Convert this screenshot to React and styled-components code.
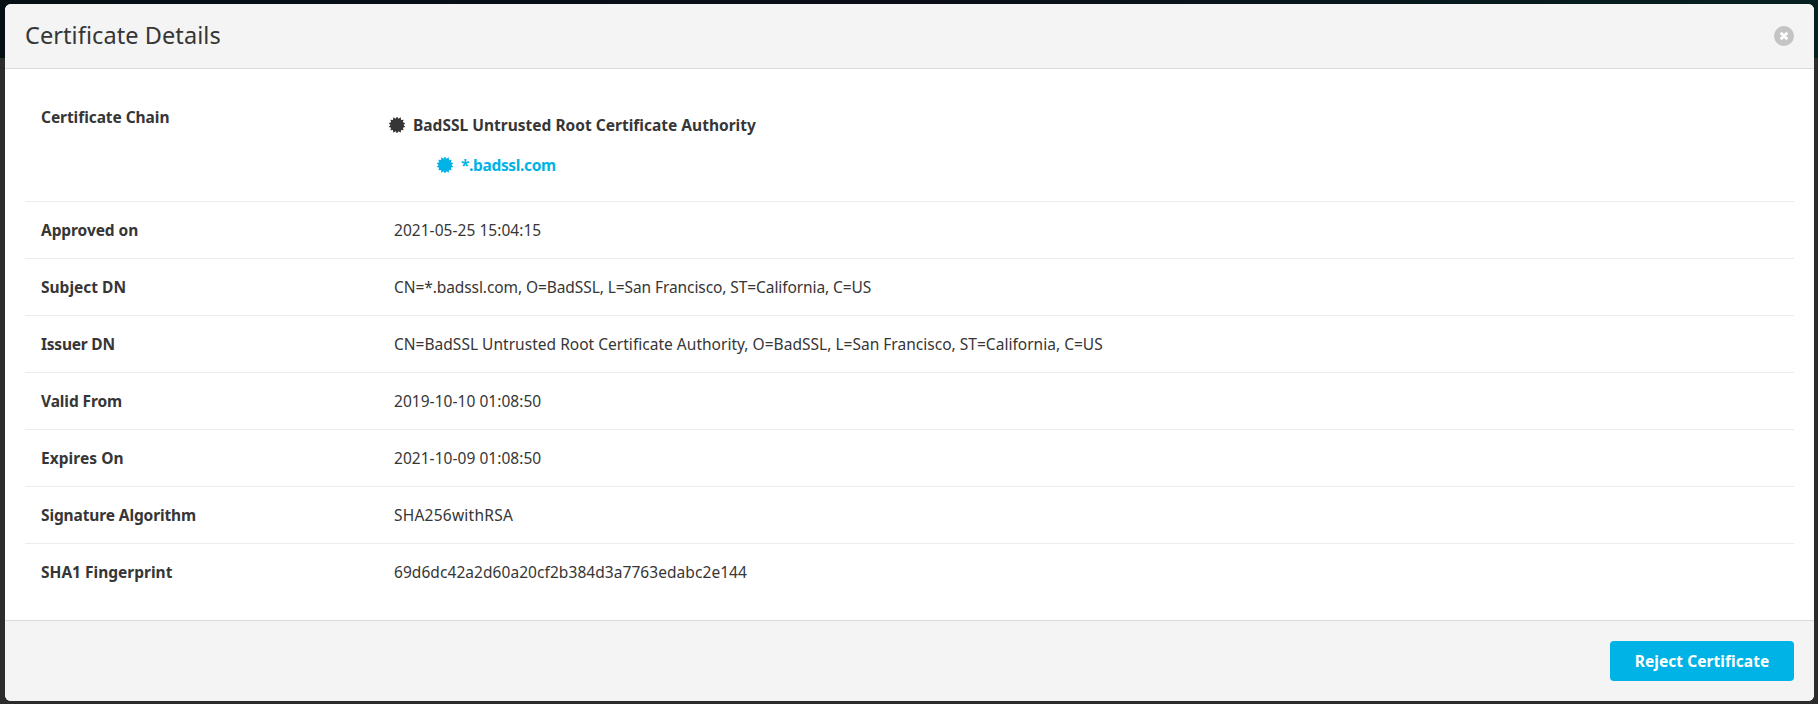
import React from 'react';
import styled, { createGlobalStyle } from 'styled-components';

const GlobalStyle = createGlobalStyle`
  * { box-sizing: border-box; }
  body { margin: 0; background: #2d2c2c; }
`;

const Backdrop = styled.div`
  height: 704px;
  padding: 4px 4px 3px 5px;
  background: linear-gradient(90deg, #040f14, #0a0d18 50%, #05211f) 0 0 / 100% 58px no-repeat, #2d2c2c;
  font-family: 'Noto Sans', sans-serif;
  font-size: 15.5px;
  color: #363636;
`;

const Dialog = styled.section`
  height: 100%;
  display: flex;
  flex-direction: column;
  background: #fff;
  border-radius: 6px;
  overflow: hidden;
`;

const Header = styled.header`
  height: 65px;
  flex: none;
  display: flex;
  align-items: center;
  justify-content: space-between;
  padding: 0 20px;
  background: #f4f4f4;
  border-bottom: 1px solid #dbdbdb;
`;

const Title = styled.h1`
  margin: 0;
  padding-bottom: 2px;
  font-size: 23.5px;
  font-weight: 400;
  line-height: 32px;
  letter-spacing: 0.08px;
`;

const CloseButton = styled.button`
  display: block;
  width: 20px;
  height: 20px;
  padding: 0;
  border: 0;
  border-radius: 50%;
  background: #c4c4c4;
  svg { display: block; }
`;

const Body = styled.div`
  flex: 1;
  padding: 20px 20px 0;
`;

const Row = styled.div`
  display: grid;
  grid-template-columns: 353px 1fr;
  align-items: start;
  height: ${(p) => p.$height || 57}px;
  padding: 16px 16px 0;
  line-height: 24px;
  border-bottom: ${(p) => (p.$last ? 'none' : '1px solid #ececec')};
`;

const Label = styled.div`
  font-weight: 700;
  white-space: nowrap;
  letter-spacing: ${(p) => p.$spacing || 0}px;
`;

const Value = styled.div`
  white-space: nowrap;
  letter-spacing: ${(p) => p.$spacing || 0}px;
`;

const Chain = styled.div`
  display: flex;
  flex-direction: column;
  gap: 16px;
  padding-top: 8px;
  margin-left: -5px;
`;

const ChainItem = styled.div`
  display: flex;
  align-items: center;
  gap: 8px;
  padding-left: ${(p) => p.$level * 48}px;
  font-weight: 700;
  color: ${(p) => (p.$active ? '#00b3e6' : 'inherit')};
  letter-spacing: ${(p) => p.$spacing}px;
`;

const Footer = styled.footer`
  height: 81px;
  flex: none;
  display: flex;
  justify-content: flex-end;
  padding: 20px;
  background: #f4f4f4;
  border-top: 1px solid #dbdbdb;
`;

const RejectButton = styled.button`
  width: 184px;
  height: 40px;
  padding: 0 0 1px;
  border: 0;
  border-radius: 4px;
  background: #00b3e6;
  color: #fff;
  font: 700 15.5px 'Noto Sans', sans-serif;
  letter-spacing: 0.06px;
`;

const SEAL_TEETH = 14;
const SEAL_POINTS = Array.from({ length: SEAL_TEETH * 2 }, (_, i) => {
  const radius = i % 2 ? 8.5 : 6.5;
  const angle = (i * Math.PI) / SEAL_TEETH;
  return `${(8 + radius * Math.cos(angle)).toFixed(2)},${(8 + radius * Math.sin(angle)).toFixed(2)}`;
}).join(' ');

function SealIcon() {
  return (
    <svg width="16" height="16" viewBox="0 0 16 16" fill="currentColor" aria-hidden="true">
      <polygon points={SEAL_POINTS} />
    </svg>
  );
}

const DETAILS = [
  { label: 'Approved on', value: '2021-05-25 15:04:15', ls: -0.08, vs: 0.04 },
  { label: 'Subject DN', value: 'CN=*.badssl.com, O=BadSSL, L=San Francisco, ST=California, C=US', ls: 0, vs: -0.085 },
  { label: 'Issuer DN', value: 'CN=BadSSL Untrusted Root Certificate Authority, O=BadSSL, L=San Francisco, ST=California, C=US', ls: -0.22, vs: 0.02 },
  { label: 'Valid From', value: '2019-10-10 01:08:50', ls: -0.1, vs: 0.04 },
  { label: 'Expires On', value: '2021-10-09 01:08:50', ls: 0.05, vs: 0.04 },
  { label: 'Signature Algorithm', value: 'SHA256withRSA', ls: -0.12, vs: 0.24 },
  { label: 'SHA1 Fingerprint', value: '69d6dc42a2d60a20cf2b384d3a7763edabc2e144', ls: 0, vs: 0.06 },
];

export default function App() {
  return (
    <Backdrop>
      <GlobalStyle />
      <Dialog role="dialog">
        <Header>
          <Title>Certificate Details</Title>
          <CloseButton aria-label="Close">
            <svg width="20" height="20" viewBox="0 0 20 20">
              <path d="M6.7 6.7l6.6 6.6M13.3 6.7l-6.6 6.6" stroke="#fff" strokeWidth="2.7" />
            </svg>
          </CloseButton>
        </Header>
        <Body>
          <Row $height={113}>
            <Label $spacing={-0.06}>Certificate Chain</Label>
            <Chain>
              <ChainItem $level={0} $spacing={0.01}>
                <SealIcon />
                BadSSL Untrusted Root Certificate Authority
              </ChainItem>
              <ChainItem $level={1} $spacing={-0.34} $active>
                <SealIcon />
                *.badssl.com
              </ChainItem>
            </Chain>
          </Row>
          {DETAILS.map((d, i) => (
            <Row key={d.label} $last={i === DETAILS.length - 1}>
              <Label $spacing={d.ls}>{d.label}</Label>
              <Value $spacing={d.vs}>{d.value}</Value>
            </Row>
          ))}
        </Body>
        <Footer>
          <RejectButton>Reject Certificate</RejectButton>
        </Footer>
      </Dialog>
    </Backdrop>
  );
}
